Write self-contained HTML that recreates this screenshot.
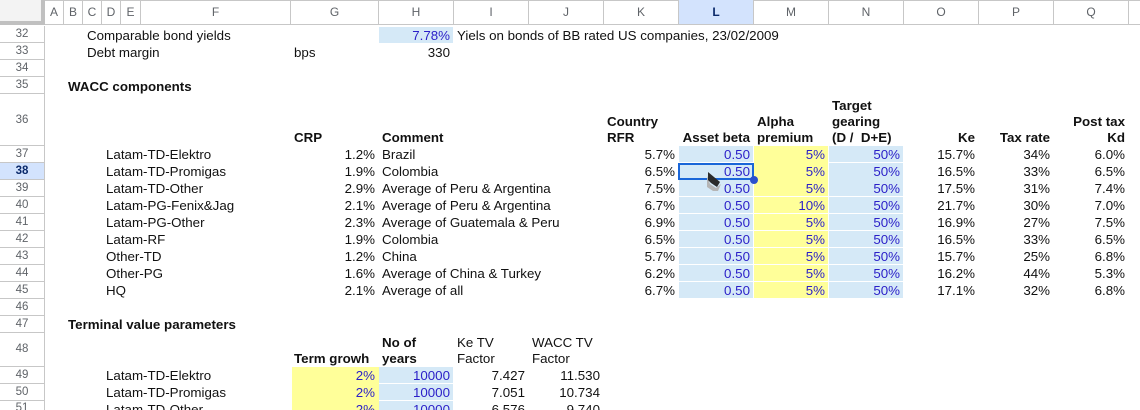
<!DOCTYPE html>
<html><head><meta charset="utf-8"><style>
html,body{margin:0;padding:0;background:#fff}
#p{position:relative;width:1140px;height:410px;overflow:hidden;background:#fff;font:13.33px/17px "Liberation Sans",sans-serif;color:#111}
#p div{position:absolute}
.x{top:0;height:24px;line-height:25px;text-align:center;font-size:12px;color:#5f6368;border-right:1px solid #c7c7c7;box-sizing:border-box}
.n{left:0;width:45px;box-sizing:border-box;border-right:1px solid #c7c7c7;border-bottom:1px solid #c7c7c7;text-align:center;font-size:11.5px;color:#5f6368}
.w{left:0;width:1140px;height:17px;white-space:nowrap}
.w b,.w span{position:absolute;top:0;font-weight:normal}
.w b{font-weight:bold}
.fb,.fy{position:absolute;top:0;height:16px}
.fb{background:#d5e9f7}.fy{background:#ffff99}
.t{height:17px}
.u{color:#2a1fc8}
.C{left:87px}.B{left:68px}.D{left:106px}.G{left:294px}.H{left:382px}.I{left:457px}.J{left:532px}.K{left:607px}.L{left:682px}.M{left:757px}.N{left:832px}
.rG{right:765px}.rH{right:690px}.rI{right:615px}.rJ{right:540px}.rK{right:465px}.rL{right:390px}.rM{right:315px}.rN{right:240px}.rO{right:165px}.rP{right:90px}.rQ{right:15px}
.hL{left:679px;width:74px}.hM{left:754px;width:74px}.hN{left:829px;width:74px}.hG{left:292px;width:87px}.hH{left:379px;width:74px}
</style></head><body><div id="p">
<div style="left:0;top:0;width:41px;height:21px;background:#f3f3f3"></div>
<div style="left:41px;top:0;width:4px;height:25px;background:#c0c0c0"></div>
<div style="left:0;top:21px;width:45px;height:4px;background:#c0c0c0"></div>
<div style="left:45px;top:0;width:1095px;height:1px;background:#c7c7c7"></div>
<div style="left:45px;top:24px;width:1095px;height:1px;background:#c7c7c7"></div>
<div class="x" style="left:45px;width:19px">A</div>
<div class="x" style="left:64px;width:19px">B</div>
<div class="x" style="left:83px;width:19px">C</div>
<div class="x" style="left:102px;width:19px">D</div>
<div class="x" style="left:121px;width:20px">E</div>
<div class="x" style="left:141px;width:150px">F</div>
<div class="x" style="left:291px;width:88px">G</div>
<div class="x" style="left:379px;width:75px">H</div>
<div class="x" style="left:454px;width:75px">I</div>
<div class="x" style="left:529px;width:75px">J</div>
<div class="x" style="left:604px;width:75px">K</div>
<div class="x" style="left:679px;width:75px;background:#d3e3fd;color:#0b2a6b;font-weight:bold">L</div>
<div class="x" style="left:754px;width:75px">M</div>
<div class="x" style="left:829px;width:75px">N</div>
<div class="x" style="left:904px;width:75px">O</div>
<div class="x" style="left:979px;width:75px">P</div>
<div class="x" style="left:1054px;width:75px">Q</div>

<div class="n" style="top:26px;height:17px;line-height:16px">32</div>
<div class="n" style="top:43px;height:17px;line-height:16px">33</div>
<div class="n" style="top:60px;height:17px;line-height:16px">34</div>
<div class="n" style="top:77px;height:17px;line-height:16px">35</div>
<div class="n" style="top:94px;height:52px;line-height:52px">36</div>
<div class="n" style="top:146px;height:17px;line-height:16px">37</div>
<div class="n" style="top:163px;height:17px;line-height:16px;background:#d3e3fd;color:#0b2a6b;font-weight:bold">38</div>
<div class="n" style="top:180px;height:17px;line-height:16px">39</div>
<div class="n" style="top:197px;height:17px;line-height:16px">40</div>
<div class="n" style="top:214px;height:17px;line-height:16px">41</div>
<div class="n" style="top:231px;height:17px;line-height:16px">42</div>
<div class="n" style="top:248px;height:17px;line-height:16px">43</div>
<div class="n" style="top:265px;height:17px;line-height:16px">44</div>
<div class="n" style="top:282px;height:17px;line-height:16px">45</div>
<div class="n" style="top:299px;height:17px;line-height:16px">46</div>
<div class="n" style="top:316px;height:17px;line-height:16px">47</div>
<div class="n" style="top:333px;height:34px;line-height:33px">48</div>
<div class="n" style="top:367px;height:17px;line-height:16px">49</div>
<div class="n" style="top:384px;height:17px;line-height:16px">50</div>
<div class="n" style="top:401px;height:17px;line-height:14px">51</div>

<div class="w" style="top:27px"><i class="fb hH"></i><span class="C">Comparable bond yields</span><span class="rH u">7.78%</span><span class="I">Yiels on bonds of BB rated US companies, 23/02/2009</span></div>
<div class="w" style="top:44px"><span class="C">Debt margin</span><span class="G">bps</span><span class="rH">330</span></div>
<div class="w" style="top:78px"><b class="B">WACC components</b></div>

<div class="w" style="top:97px"><b class="N">Target</b></div>
<div class="w" style="top:113px"><b class="K">Country</b><b class="M">Alpha</b><b class="N">gearing</b><b class="rQ">Post tax</b></div>
<div class="w" style="top:129px"><b class="G">CRP</b><b class="H">Comment</b><b class="K">RFR</b><b class="rL">Asset beta</b><b class="M">premium</b><b class="N">(D /&nbsp; D+E)</b><b class="rO">Ke</b><b class="rP">Tax rate</b><b class="rQ">Kd</b></div>

<div class="w" style="top:146px"><i class="fb hL"></i><i class="fy hM t"></i><i class="fb hN"></i><span class="D">Latam-TD-Elektro</span><span class="rG">1.2%</span><span class="H">Brazil</span><span class="rK">5.7%</span><span class="rL u">0.50</span><span class="rM u">5%</span><span class="rN u">50%</span><span class="rO">15.7%</span><span class="rP">34%</span><span class="rQ">6.0%</span></div>
<div class="w" style="top:163px"><i class="fb hL"></i><i class="fy hM t"></i><i class="fb hN t"></i><span class="D">Latam-TD-Promigas</span><span class="rG">1.9%</span><span class="H">Colombia</span><span class="rK">6.5%</span><span class="rL u">0.50</span><span class="rM u">5%</span><span class="rN u">50%</span><span class="rO">16.5%</span><span class="rP">33%</span><span class="rQ">6.5%</span></div>
<div class="w" style="top:180px"><i class="fb hL"></i><i class="fy hM"></i><i class="fb hN"></i><span class="D">Latam-TD-Other</span><span class="rG">2.9%</span><span class="H">Average of Peru &amp; Argentina</span><span class="rK">7.5%</span><span class="rL u">0.50</span><span class="rM u">5%</span><span class="rN u">50%</span><span class="rO">17.5%</span><span class="rP">31%</span><span class="rQ">7.4%</span></div>
<div class="w" style="top:197px"><i class="fb hL"></i><i class="fy hM"></i><i class="fb hN"></i><span class="D">Latam-PG-Fenix&amp;Jag</span><span class="rG">2.1%</span><span class="H">Average of Peru &amp; Argentina</span><span class="rK">6.7%</span><span class="rL u">0.50</span><span class="rM u">10%</span><span class="rN u">50%</span><span class="rO">21.7%</span><span class="rP">30%</span><span class="rQ">7.0%</span></div>
<div class="w" style="top:214px"><i class="fb hL"></i><i class="fy hM"></i><i class="fb hN"></i><span class="D">Latam-PG-Other</span><span class="rG">2.3%</span><span class="H">Average of Guatemala &amp; Peru</span><span class="rK">6.9%</span><span class="rL u">0.50</span><span class="rM u">5%</span><span class="rN u">50%</span><span class="rO">16.9%</span><span class="rP">27%</span><span class="rQ">7.5%</span></div>
<div class="w" style="top:231px"><i class="fb hL"></i><i class="fy hM"></i><i class="fb hN"></i><span class="D">Latam-RF</span><span class="rG">1.9%</span><span class="H">Colombia</span><span class="rK">6.5%</span><span class="rL u">0.50</span><span class="rM u">5%</span><span class="rN u">50%</span><span class="rO">16.5%</span><span class="rP">33%</span><span class="rQ">6.5%</span></div>
<div class="w" style="top:248px"><i class="fb hL"></i><i class="fy hM"></i><i class="fb hN"></i><span class="D">Other-TD</span><span class="rG">1.2%</span><span class="H">China</span><span class="rK">5.7%</span><span class="rL u">0.50</span><span class="rM u">5%</span><span class="rN u">50%</span><span class="rO">15.7%</span><span class="rP">25%</span><span class="rQ">6.8%</span></div>
<div class="w" style="top:265px"><i class="fb hL"></i><i class="fy hM"></i><i class="fb hN"></i><span class="D">Other-PG</span><span class="rG">1.6%</span><span class="H">Average of China &amp; Turkey</span><span class="rK">6.2%</span><span class="rL u">0.50</span><span class="rM u">5%</span><span class="rN u">50%</span><span class="rO">16.2%</span><span class="rP">44%</span><span class="rQ">5.3%</span></div>
<div class="w" style="top:282px"><i class="fb hL"></i><i class="fy hM"></i><i class="fb hN"></i><span class="D">HQ</span><span class="rG">2.1%</span><span class="H">Average of all</span><span class="rK">6.7%</span><span class="rL u">0.50</span><span class="rM u">5%</span><span class="rN u">50%</span><span class="rO">17.1%</span><span class="rP">32%</span><span class="rQ">6.8%</span></div>

<div class="w" style="top:316px"><b class="B">Terminal value parameters</b></div>
<div class="w" style="top:334px"><b class="H">No of</b><span class="I">Ke TV</span><span class="J">WACC TV</span></div>
<div class="w" style="top:350px"><b class="G">Term growh</b><b class="H">years</b><span class="I">Factor</span><span class="J">Factor</span></div>
<div class="w" style="top:367px"><i class="fy hG t"></i><i class="fb hH"></i><span class="D">Latam-TD-Elektro</span><span class="rG u">2%</span><span class="rH u">10000</span><span class="rI">7.427</span><span class="rJ">11.530</span></div>
<div class="w" style="top:384px"><i class="fy hG t"></i><i class="fb hH"></i><span class="D">Latam-TD-Promigas</span><span class="rG u">2%</span><span class="rH u">10000</span><span class="rI">7.051</span><span class="rJ">10.734</span></div>
<div class="w" style="top:401px"><i class="fy hG t"></i><i class="fb hH"></i><span class="D">Latam-TD-Other</span><span class="rG u">2%</span><span class="rH u">10000</span><span class="rI">6.576</span><span class="rJ">9.740</span></div>

<div style="left:678px;top:163px;width:76px;height:17px;box-sizing:border-box;border:2px solid #1a66d8"></div>
<div style="left:750px;top:176px;width:8px;height:8px;border-radius:50%;background:#2a50cc"></div>
<svg style="position:absolute;left:700px;top:165px" width="30" height="30" viewBox="700 165 30 30"><path d="M707 176L707 187L713 191L718 191L721 184L716 188L710 184Z" fill="#b5b5b5"/><path d="M708 172L720 182L717 187L711 183L708 180Z" fill="#2b2b2b"/></svg>
</div></body></html>
